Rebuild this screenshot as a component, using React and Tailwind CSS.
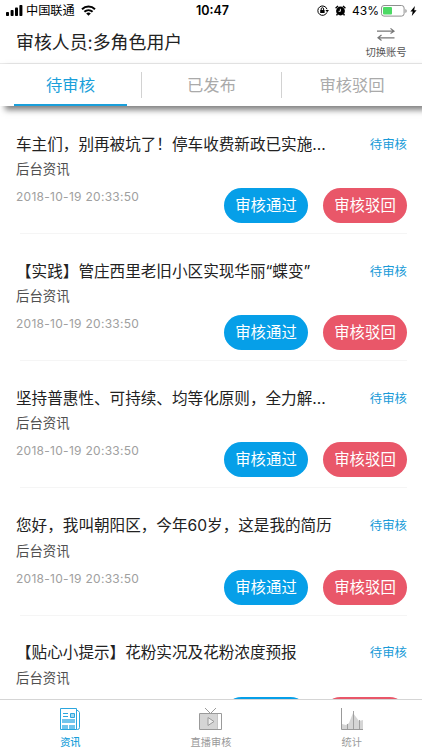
import React from "react";

const items = [
  "车主们，别再被坑了！停车收费新政已实施...",
  "【实践】管庄西里老旧小区实现华丽“蝶变”",
  "坚持普惠性、可持续、均等化原则，全力解...",
  "您好，我叫朝阳区，今年60岁，这是我的简历",
  "【贴心小提示】花粉实况及花粉浓度预报",
];

function StatusBar() {
  return (
    <div className="flex h-[21px] shrink-0 items-center text-black">
      <svg className="ml-1.5" width="17" height="11" viewBox="0 0 17 11">
        <rect x="0" y="7" width="3" height="4" rx="0.8" />
        <rect x="4.6" y="5" width="3" height="6" rx="0.8" />
        <rect x="9" y="2.6" width="3" height="8.4" rx="0.8" />
        <rect x="13.4" y="0" width="3" height="11" rx="0.8" />
      </svg>
      <span className="ml-[3px] w-[50px] whitespace-nowrap text-[12.2px] leading-[22px]">中国联通</span>
      <svg className="ml-[5px]" width="15" height="11" viewBox="0 0 15 11" fill="none" stroke="#000" strokeWidth="2">
        <path d="M1 4.2a9.4 9.4 0 0 1 13 0M3.4 6.8a6 6 0 0 1 8.2 0" />
        <path d="M7.5 10.8 5.2 8.5a3.3 3.3 0 0 1 4.6 0z" fill="#000" stroke="none" />
      </svg>
      <span className="ml-[100px] w-[35px] whitespace-nowrap text-[12.5px] font-semibold leading-5">10:47</span>
      <svg className="ml-[86px]" width="12" height="11" viewBox="0 0 12 11" fill="none" stroke="#000">
        <path d="M9.9 7.4A4.7 4.7 0 1 1 10 4.2" />
        <path d="m8.4 5 1.8 2.2L12 5z" fill="#000" stroke="none" />
        <rect x="3.2" y="5" width="4.4" height="3" fill="#000" stroke="none" />
        <path d="M4.2 5V3.9a1.2 1.2 0 0 1 2.4 0V5" />
      </svg>
      <svg className="ml-[6px]" width="11" height="11" viewBox="0 0 11 11">
        <circle cx="5.5" cy="6" r="4.4" />
        <path d="M.6 3.2 3 .9M10.4 3.2 8 .9M2.5 9 1.5 10.4M8.5 9l1 1.4" stroke="#000" strokeWidth="1.4" />
        <path d="M5.4 3.8v2.5H3.6" fill="none" stroke="#fff" strokeWidth="0.9" />
      </svg>
      <span className="ml-[6px] w-[26px] whitespace-nowrap text-[12px] leading-5">43%</span>
      <svg className="ml-[3px]" width="26" height="12" viewBox="0 0 26 12">
        <rect x="0.5" y="0.5" width="22.6" height="10.6" rx="2.5" fill="none" stroke="#8f8f8f" />
        <rect x="2" y="2" width="9" height="7.6" rx="1" fill="#4cd964" />
        <path d="M24.4 4v4q1.3-.5 1.3-2t-1.3-2" fill="#8f8f8f" />
      </svg>
      <svg className="ml-[3px]" width="7" height="10" viewBox="0 0 7 10">
        <path d="M4.9 0 .4 5.5h2.3L1.8 10l4.8-5.8H4.2z" />
      </svg>
    </div>
  );
}

function Article({ title }) {
  return (
    <article className="h-[127.2px] pl-4 pr-[15px]">
      <div className="flex h-[34px] items-center justify-between pt-[13px]">
        <h2 className="whitespace-nowrap text-[15.6px] font-normal leading-[22px] text-[#222]">{title}</h2>
        <span className="text-[12.4px] leading-5 text-[#1a9bd8]">待审核</span>
      </div>
      <p className="mt-1 text-[13.4px] leading-5 text-[#505050]">后台资讯</p>
      <div className="flex h-[54px] items-start justify-between">
        <time className="mt-[8px] font-['Inter'] text-[12px] leading-5 tracking-[0.28px] text-[#a0a0a0]">2018-10-19 20:33:50</time>
        <div className="mt-[9px] flex gap-[15px]">
          <button className="h-[35px] w-[84px] whitespace-nowrap rounded-full bg-[#069fe8] text-[15.4px] leading-[35px] text-white">审核通过</button>
          <button className="h-[35px] w-[84px] whitespace-nowrap rounded-full bg-[#e95769] text-[15.4px] leading-[35px] text-white">审核驳回</button>
        </div>
      </div>
      <div className="ml-1 h-px bg-[#f5f5f5]" />
    </article>
  );
}

function NewsIcon() {
  return (
    <svg width="22" height="24" viewBox="0 0 22 24" fill="none" stroke="#2ba6de">
      <path d="M1.5 1.5h16v21h-16z" />
      <path d="M17.5 3.5h1.5l1.5 2v15q0 2-2 2h-1" />
      <path d="M4 6.5h5M4 9.5h5" />
      <path d="M3 12h13v4H3zM3 18h6v4H3zM10 18h6v4h-6z" fill="#72c5ec" stroke="none" />
      <path d="M11.5 6.5h4v4h-4z" fill="#9ed8f2" />
    </svg>
  );
}

function TvIcon() {
  return (
    <svg width="26" height="24" viewBox="0 0 26 24" fill="none" stroke="#9a9a9a">
      <path d="M2 7h17v15H2z" fill="#d5d5d5" stroke="none" />
      <path d="M1.5 6.5h22v16h-22zM7 1l5.5 5.5L18 1" />
      <path d="M19.5 7v15" stroke="#c5c5c5" />
      <path d="m10 10.5 6 4-6 4z" fill="#eee" />
    </svg>
  );
}

function ChartIcon() {
  return (
    <svg width="24" height="24" viewBox="0 0 24 24" fill="none" stroke="#999">
      <path d="M2 22v-5l4 1 3-2 4-10 3 4 3 4 4-1v9z" fill="#d5d5d5" stroke="none" />
      <path d="M1.5 1v21.5H23" />
      <path d="M7.5 17v5M13.5 4v18M19.5 13v9" strokeWidth="0.9" />
    </svg>
  );
}

export default function App() {
  return (
    <div className="flex h-[750px] w-[422px] flex-col overflow-hidden bg-white font-['Inter','Noto_Sans_CJK_SC',sans-serif]">
      <StatusBar />
      <header className="flex h-[43px] shrink-0 justify-between border-b border-[#eaeaea] pl-4 pr-[15px]">
        <h1 className="pt-[9px] text-[17.9px] font-normal leading-[26px] text-[#222]">审核人员:多角色用户</h1>
        <div className="flex w-[42px] flex-col items-center pt-[6px]">
          <svg width="20" height="15" viewBox="0 0 20 15" fill="none" stroke="#777" strokeWidth="1.2">
            <path d="M1 4.2h17M14.5 1.4 18 4.2l-3.5 2.2M18.5 10.8H2M5.5 8 2 10.8l3.5 2.6" />
          </svg>
          <span className="whitespace-nowrap text-[10.3px] leading-5 text-[#555]">切换账号</span>
        </div>
      </header>
      <nav className="relative z-10 flex h-[42px] shrink-0 items-center bg-white text-[16.3px] text-[#aaa] shadow-[5px_4px_6px_rgba(0,0,0,0.5)]">
        <div className="flex h-[42px] w-[141px] flex-col items-center text-[#1a9fda]">
          <span className="h-10 leading-[42px]">待审核</span>
          <div className="h-0.5 w-[113px] bg-[#1a9fda]" />
        </div>
        <div className="flex h-[26px] w-[141px] items-center justify-center border-x border-[#d2d2d2]">已发布</div>
        <div className="flex w-[140px] justify-center">审核驳回</div>
      </nav>
      <main className="min-h-0 flex-1 overflow-hidden pt-[15px]">
        {items.map((title) => <Article key={title} title={title} />)}
      </main>
      <footer className="grid h-[51px] shrink-0 grid-cols-3 border-t border-[#d5d5d5] bg-white text-[10.2px] text-[#999]">
        <div className="flex flex-col items-center pt-[7px] text-[#1a9fda]"><NewsIcon /><span className="font-medium leading-[23px]">资讯</span></div>
        <div className="flex flex-col items-center pt-[7px]"><TvIcon /><span className="leading-[23px]">直播审核</span></div>
        <div className="flex flex-col items-center pt-[7px]"><ChartIcon /><span className="leading-[23px]">统计</span></div>
      </footer>
    </div>
  );
}
